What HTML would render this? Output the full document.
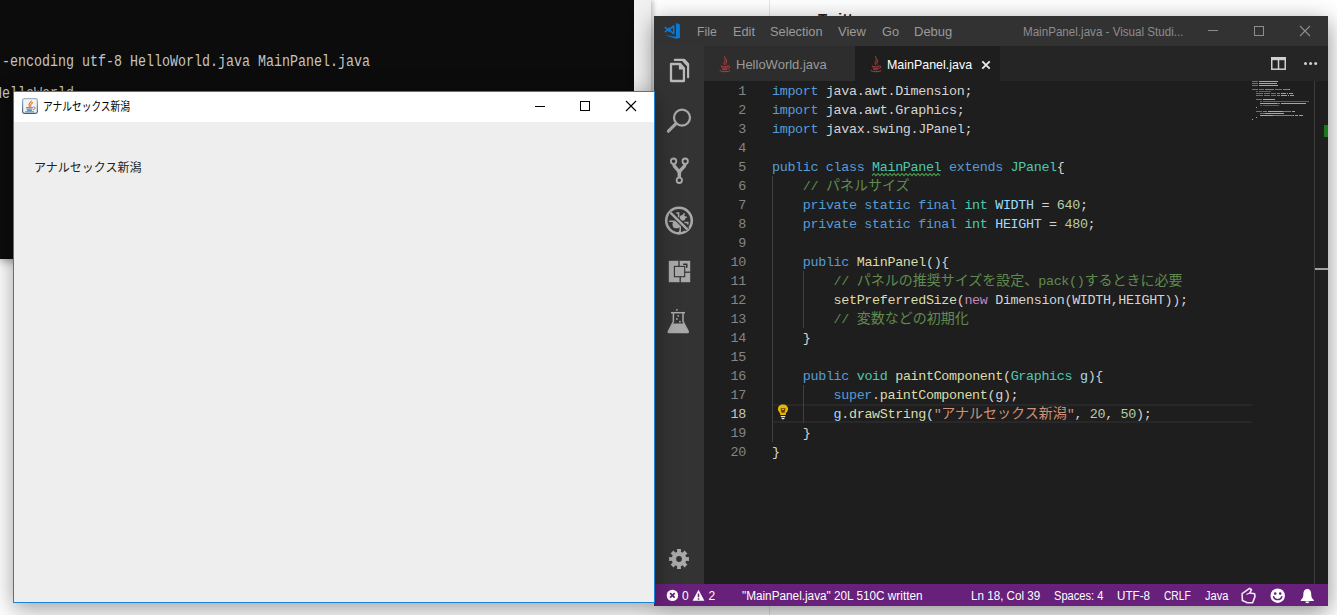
<!DOCTYPE html>
<html lang="ja">
<head>
<meta charset="utf-8">
<title>MainPanel.java - Visual Studio Code</title>
<style>
*{box-sizing:border-box;margin:0;padding:0}
html,body{width:1337px;height:615px;overflow:hidden;background:#fff}
body{position:relative;font-family:"Liberation Sans","Noto Sans CJK JP",sans-serif}
.abs{position:absolute}
/* ---------- background browser page ---------- */
#bgline{left:769px;top:0;width:1px;height:615px;background:#e6e6e6}
#bgtw{left:818px;top:11px;font-size:15px;font-weight:bold;color:#222;line-height:16px;letter-spacing:.2px}
/* ---------- console ---------- */
#con{left:0;top:0;width:634px;height:259px;background:#0c0c0c;box-shadow:0 2px 9px rgba(0,0,0,.4)}
#consb{left:634px;top:0;width:17px;height:259px;background:#f0f0f0;box-shadow:2px 0 5px rgba(0,0,0,.25)}
.cl{position:absolute;left:2px;white-space:pre;font-family:"Liberation Mono","Noto Sans CJK JP",monospace;font-size:15.6px;line-height:16px;color:#c4c4c4;transform-origin:0 50%;transform:scaleX(.8547)}
/* ---------- java window ---------- */
#jw{z-index:5;left:13px;top:91px;width:642px;height:512px;background:#eeeeee;border:1px solid #1883d7;box-shadow:0 6px 22px rgba(0,0,0,.38)}
#jt{left:0;top:0;width:640px;height:30px;background:#fff}
#jtt{left:29px;top:7px;font-size:12px;line-height:16px;color:#000;white-space:nowrap;transform-origin:0 50%;transform:scaleX(.81);font-family:"Liberation Sans","Noto Sans CJK JP",sans-serif}
#jpt{left:20px;top:68px;font-size:12px;line-height:16px;color:#222;white-space:nowrap;font-family:"Liberation Sans","Noto Sans CJK JP",sans-serif}
/* ---------- vscode ---------- */
#vs{left:654px;top:16px;width:674px;height:590px;background:#1e1e1e;box-shadow:0 6px 22px rgba(0,0,0,.45);overflow:hidden}
#vt{left:0;top:0;width:674px;height:30px;background:#323233}
.mi{position:absolute;top:8px;transform-origin:0 50%;font-size:13px;line-height:16px;color:#9a9a9a;white-space:nowrap}
#vtitle{transform-origin:0 50%;transform:scaleX(.967);left:369px;top:8px;font-size:12px;line-height:16px;color:#8d8d8d;white-space:nowrap}
#ab{left:0;top:30px;width:50px;height:538px;background:#333333}
#tabs{left:50px;top:30px;width:624px;height:35px;background:#252526}
.tab{position:absolute;top:0;height:35px;background:#2d2d2d}
.tab span{transform-origin:0 50%;position:absolute;top:10px;font-size:13px;line-height:17px;white-space:nowrap}
#ed{left:50px;top:65px;width:624px;height:503px;background:#1e1e1e}
.ln{position:absolute;left:0;width:42px;padding-top:1px;text-align:right;font-family:"Liberation Mono",monospace;font-size:13.4px;letter-spacing:-.34px;line-height:19px;color:#858585;height:19px}
.c{padding-top:1px;position:absolute;left:68px;white-space:pre;font-family:"Liberation Mono","Noto Sans CJK JP",monospace;font-size:13.4px;letter-spacing:-.34px;line-height:19px;height:19px;color:#d4d4d4}
.c i{font-style:normal}
.k{color:#569cd6}.t{color:#4ec9b0}.f{color:#dcdcaa}.v{color:#9cdcfe}.n{color:#b5cea8}.s{color:#ce9178}.m{color:#608b4e}.p{color:#c586c0}
.j{line-height:10px;font-size:14px;letter-spacing:0;font-family:"Noto Sans CJK JP",sans-serif}
.ig{position:absolute;width:1px;background:#404040}
#sb{left:0;top:568px;width:674px;height:22px;background:#68217a}
.si{transform-origin:0 50%;position:absolute;top:4px;font-size:12px;line-height:16px;color:#fff;white-space:nowrap}
#mm{left:548px;top:0;width:62px;height:60px;overflow:hidden;opacity:.75}
#mm b{position:absolute;height:1.4px;display:block}
.cur{color:#c6c6c6}
</style>
</head>
<body>
<!-- background page -->
<div class="abs" id="bgline"></div>
<div class="abs" id="bgtw">Twitter</div>

<!-- console -->
<div class="abs" id="con">
  <div class="cl" style="top:54px">-encoding utf-8 HelloWorld.java MainPanel.java</div>
  <div class="cl" style="top:86px;left:-6px">HelloWorld</div>
</div>
<div class="abs" id="consb"></div>

<!-- java window -->
<div class="abs" id="jw">
  <div class="abs" id="jt">
    <svg class="abs" style="left:8px;top:6px" width="16" height="16" viewBox="0 0 16 16">
      <defs><linearGradient id="jg" x1="0" y1="0" x2="0" y2="1"><stop offset="0" stop-color="#9fb6c9"/><stop offset="1" stop-color="#3e5f7e"/></linearGradient></defs>
      <rect x=".6" y=".6" width="14.8" height="14.8" rx="1.8" fill="#f3f3f3" stroke="url(#jg)" stroke-width="1.2"/>
      <path d="M7.6 8.6C5.6 6.6 8.2 4.6 9.4 3.2M8.8 8.2C7.6 6.6 9.8 5.6 10.6 4.6" fill="none" stroke="#e8731a" stroke-width="1.1" stroke-linecap="round"/>
      <path d="M4.4 9.7h6.2M5 11.2h5M5.6 12.4h3.8M3.6 13.8h8" fill="none" stroke="#5382a1" stroke-width="1" stroke-linecap="round"/>
      <path d="M11.4 8.8c2.2-.2 2.2 2.6-.2 3" fill="none" stroke="#5382a1" stroke-width="1"/>
    </svg>
    <div class="abs" id="jtt">アナルセックス新潟</div>
    <div class="abs" style="left:521px;top:14px;width:10px;height:1px;background:#000"></div>
    <div class="abs" style="left:566px;top:9px;width:10px;height:10px;border:1px solid #000"></div>
    <svg class="abs" style="left:611px;top:8px" width="12" height="12" viewBox="0 0 12 12"><path d="M1 1L11 11M11 1L1 11" stroke="#000" stroke-width="1.1" fill="none"/></svg>
  </div>
  <div class="abs" id="jpt">アナルセックス新潟</div>
</div>

<!-- vscode -->
<div class="abs" id="vs">
  <div class="abs" id="vt">
    <svg class="abs" style="left:10px;top:6px" width="17" height="18" viewBox="0 0 17 18">
      <path d="M12 .9L15.900 2.400V15.900L12 16.800Z" fill="#0a7ad6"/>
      <path d="M.3 13L12 14.700V16.800Z" fill="#0a7ad6"/>
      <path d="M9.700 3.900V11.800L5 7.850Z" fill="none" stroke="#0a7ad6" stroke-width="1.500" stroke-linejoin="round"/>
      <path d="M.9 5.100L5.600 9.600M.9 10.200L5.600 5.900" stroke="#0a7ad6" stroke-width="1.500" fill="none"/>
    </svg>
    <div class="mi" style="left:43px;transform:scaleX(0.94)">File</div>
    <div class="mi" style="left:79px;transform:scaleX(0.98)">Edit</div>
    <div class="mi" style="left:116px;transform:scaleX(0.983)">Selection</div>
    <div class="mi" style="left:184px">View</div>
    <div class="mi" style="left:228px;transform:scaleX(0.98)">Go</div>
    <div class="mi" style="left:260px">Debug</div>
    <div class="abs" id="vtitle">MainPanel.java - Visual Studi...</div>
    <div class="abs" style="left:554px;top:14px;width:10px;height:1px;background:#8d8d8d"></div>
    <div class="abs" style="left:600px;top:10px;width:10px;height:10px;border:1px solid #8d8d8d"></div>
    <svg class="abs" style="left:645px;top:9px" width="12" height="12" viewBox="0 0 12 12"><path d="M1 1L11 11M11 1L1 11" stroke="#8d8d8d" stroke-width="1.1" fill="none"/></svg>
  </div>
  <div class="abs" id="ab"><svg class="abs" style="left:0;top:0" width="50" height="538" viewBox="0 0 50 538">
    <!-- files -->
    <path d="M20.800 13.900H30L34.100 18.400V31.300" fill="none" stroke="#b9b9b9" stroke-width="2.200" stroke-linejoin="round" stroke-linecap="round"/>
    <path d="M29.600 14.100L33.900 18.800" stroke="#b9b9b9" stroke-width="3.400" fill="none"/>
    <path d="M17 18H26.200L29.950 22.200V35H17Z" fill="#333" stroke="#b9b9b9" stroke-width="2.300" stroke-linejoin="round"/>
    <path d="M24.900 18V23.600H30V22.200L26.200 18Z" fill="#b9b9b9"/>
    <!-- search -->
    <circle cx="28" cy="71.6" r="8" fill="none" stroke="#a9a9a9" stroke-width="2.2"/>
    <path d="M22 77.6L14.4 85.2" stroke="#a9a9a9" stroke-width="3.2" stroke-linecap="round"/>
    <!-- git -->
    <path d="M19.6 117.6C19.6 122.5 25.3 122.5 25.3 127.5V131.6M31.2 117.6C31.2 122.5 25.3 122.5 25.3 127.5" fill="none" stroke="#a9a9a9" stroke-width="3.4"/>
    <circle cx="19.6" cy="115.2" r="2.7" fill="#333" stroke="#a9a9a9" stroke-width="1.8"/>
    <circle cx="31.2" cy="115.2" r="2.7" fill="#333" stroke="#a9a9a9" stroke-width="1.8"/>
    <circle cx="25.3" cy="134.3" r="2.7" fill="#333" stroke="#a9a9a9" stroke-width="1.8"/>
    <!-- debug disabled -->
    <g>
      <circle cx="25" cy="174.600" r="12.800" fill="none" stroke="#a9a9a9" stroke-width="2.600"/>
      <circle cx="22.400" cy="178.400" r="3.900" fill="#a9a9a9"/>
      <circle cx="28.600" cy="171.800" r="2.900" fill="#a9a9a9"/>
      <path d="M22.300 166.900H24.600V171.500M28.600 170L30.600 167.400M30.500 171.200H32.800M15.200 175.200H20.400M30.400 176.500H33.800V178.400M26.200 178.500V185.200H24.800" fill="none" stroke="#a9a9a9" stroke-width="1.500"/>
      <path d="M16.400 166.600L33.600 183.600" stroke="#333" stroke-width="4.800"/>
      <path d="M16.400 166.600L33.600 183.600" stroke="#a9a9a9" stroke-width="2.500"/>
    </g>
    <!-- extensions -->
    <g transform="translate(14.8,214.8)">
      <rect x="0" y="0" width="21.4" height="21.4" fill="#a9a9a9"/>
      <path d="M10.2 0V6M11.4 15.5V21.4" stroke="#333" stroke-width="1.3"/>
      <path d="M16 11.4H21.4" stroke="#333" stroke-width="1.3"/>
      <rect x="5.6" y="5.6" width="10.3" height="10.3" fill="#a9a9a9" stroke="#333" stroke-width="1.1"/>
      <path d="M14.3 3.4H17.9V7" fill="none" stroke="#333" stroke-width="1.6"/>
    </g>
    <!-- flask -->
    <g>
      <path d="M17 266.7H31" stroke="#a9a9a9" stroke-width="1.5"/>
      <path d="M19.4 267V275.5L14.4 285.4Q14 286.6 15.4 286.6H33.2Q34.6 286.6 34.2 285.4L29 275.5V267" fill="none" stroke="#a9a9a9" stroke-width="1.5" stroke-linejoin="round"/>
      <path d="M18.8 277.6H29.8L34.4 286.6H14.2Z" fill="#a9a9a9"/>
      <circle cx="22.9" cy="263.8" r=".9" fill="#a9a9a9"/>
      <circle cx="24.2" cy="269.8" r=".9" fill="#a9a9a9"/>
      <circle cx="22.9" cy="272.9" r=".9" fill="#a9a9a9"/>
      <circle cx="25.9" cy="275.7" r=".9" fill="#a9a9a9"/>
    </g>
    <!-- gear -->
    <circle cx="25" cy="513" r="7.300" fill="#a9a9a9"/>
    <path d="M23.19 506.45L22.99 503.10L27.01 503.10L26.81 506.45L28.35 507.08L30.58 504.58L33.42 507.42L30.92 509.65L31.55 511.19L34.90 510.99L34.90 515.01L31.55 514.81L30.92 516.35L33.42 518.58L30.58 521.42L28.35 518.92L26.81 519.55L27.01 522.90L22.99 522.90L23.19 519.55L21.65 518.92L19.42 521.42L16.58 518.58L19.08 516.35L18.45 514.81L15.10 515.01L15.10 510.99L18.45 511.19L19.08 509.65L16.58 507.42L19.42 504.58L21.65 507.08Z" fill="#a9a9a9"/>
    <circle cx="25" cy="513" r="2.900" fill="#333"/>
  </svg></div>
  <div class="abs" id="tabs">
    <svg class="abs" style="left:567px;top:11px" width="15" height="13" viewBox="0 0 15 13"><rect x=".75" y="1.5" width="13.5" height="10.7" fill="none" stroke="#d0d0d0" stroke-width="1.5"/><path d="M0 1.6H15" stroke="#d0d0d0" stroke-width="3.2"/><path d="M7.5 1.5V12" stroke="#d0d0d0" stroke-width="1.5"/></svg>
    <svg class="abs" style="left:599px;top:15px" width="16" height="5" viewBox="0 0 16 5"><circle cx="2.5" cy="2.4" r="1.5" fill="#d0d0d0"/><circle cx="7.6" cy="2.4" r="1.5" fill="#d0d0d0"/><circle cx="12.7" cy="2.4" r="1.5" fill="#d0d0d0"/></svg>
    <div class="tab" style="left:0;width:150.5px"><svg class="abs" style="left:14px;top:9px" width="14" height="18" viewBox="0 0 14 18"><g fill="none" stroke="#c24141" stroke-width=".9" stroke-linecap="round"><path d="M6.4 9.6C4.6 7.4 8.8 6 6.6 1.6"/><path d="M8 9.2C7 7.6 9.4 6.6 8.6 4.8"/><path d="M3 10.8C2.2 11.4 5 11.9 7 11.8S10.6 11.2 10 10.8"/><path d="M10.6 11C12.4 10.6 12.6 12.6 10.4 13.4"/><path d="M3.6 12.8C3.4 13.6 9.4 13.7 9.8 12.9"/><path d="M4.2 14.4C4.2 15 8.8 15.1 9 14.5"/><path d="M2 15.2C.4 16.2 6 17 9 16.6S12.4 15.6 11.6 15.4"/></g></svg><span style="left:32px;color:#9a9a9a">HelloWorld.java</span></div>
    <div class="tab" style="left:150.5px;width:145.5px;background:#1e1e1e"><svg class="abs" style="left:14px;top:9px" width="14" height="18" viewBox="0 0 14 18"><g fill="none" stroke="#c24141" stroke-width=".9" stroke-linecap="round"><path d="M6.4 9.6C4.6 7.4 8.8 6 6.6 1.6"/><path d="M8 9.2C7 7.6 9.4 6.6 8.6 4.8"/><path d="M3 10.8C2.2 11.4 5 11.9 7 11.8S10.6 11.2 10 10.8"/><path d="M10.6 11C12.4 10.6 12.6 12.6 10.4 13.4"/><path d="M3.6 12.8C3.4 13.6 9.4 13.7 9.8 12.9"/><path d="M4.2 14.4C4.2 15 8.8 15.1 9 14.5"/><path d="M2 15.2C.4 16.2 6 17 9 16.6S12.4 15.6 11.6 15.4"/></g></svg><span style="left:32.5px;color:#fff;transform:scaleX(.957)">MainPanel.java</span><svg class="abs" style="left:126.600px;top:13.500px" width="10" height="10" viewBox="0 0 10 10"><path d="M1.3 1.3L8.7 8.7M8.7 1.3L1.3 8.7" stroke="#e8e8e8" stroke-width="1.9"/></svg></div>
  </div>
  <div class="abs" id="ed">
    <div class="abs" style="left:68px;top:323px;width:480px;height:19px;border-top:2px solid #282828;border-bottom:2px solid #282828"></div>
    <div class="ig" style="left:68px;top:95px;height:266px"></div>
    <div class="ig" style="left:99px;top:190px;height:57px"></div>
    <div class="ig" style="left:99px;top:304px;height:38px"></div>
<div class="ln" style="top:0px">1</div>
<div class="c" style="top:0px"><i class="k">import</i> java.awt.Dimension;</div>
<div class="ln" style="top:19px">2</div>
<div class="c" style="top:19px"><i class="k">import</i> java.awt.Graphics;</div>
<div class="ln" style="top:38px">3</div>
<div class="c" style="top:38px"><i class="k">import</i> javax.swing.JPanel;</div>
<div class="ln" style="top:57px">4</div>
<div class="ln" style="top:76px">5</div>
<div class="c" style="top:76px"><i class="k">public class </i><i class="t sq">MainPanel</i> <i class="k">extends</i> <i class="t">JPanel</i>{</div>
<div class="ln" style="top:95px">6</div>
<div class="c" style="top:95px">    <i class="m">// <i class="j">パネルサイズ</i></i></div>
<div class="ln" style="top:114px">7</div>
<div class="c" style="top:114px">    <i class="k">private static final </i><i class="t">int</i> <i class="v">WIDTH</i> = <i class="n">640</i>;</div>
<div class="ln" style="top:133px">8</div>
<div class="c" style="top:133px">    <i class="k">private static final </i><i class="t">int</i> <i class="v">HEIGHT</i> = <i class="n">480</i>;</div>
<div class="ln" style="top:152px">9</div>
<div class="ln" style="top:171px">10</div>
<div class="c" style="top:171px">    <i class="k">public</i> <i class="f">MainPanel</i>(){</div>
<div class="ln" style="top:190px">11</div>
<div class="c" style="top:190px">        <i class="m">// <i class="j">パネルの推奨サイズを設定、</i>pack()<i class="j">するときに必要</i></i></div>
<div class="ln" style="top:209px">12</div>
<div class="c" style="top:209px">        <i class="f">setPreferredSize</i>(<i class="p">new</i> Dimension(WIDTH,HEIGHT));</div>
<div class="ln" style="top:228px">13</div>
<div class="c" style="top:228px">        <i class="m">// <i class="j">変数などの初期化</i></i></div>
<div class="ln" style="top:247px">14</div>
<div class="c" style="top:247px">    }</div>
<div class="ln" style="top:266px">15</div>
<div class="ln" style="top:285px">16</div>
<div class="c" style="top:285px">    <i class="k">public</i> <i class="t">void</i> <i class="f">paintComponent</i>(<i class="t">Graphics</i> <i class="v">g</i>){</div>
<div class="ln" style="top:304px">17</div>
<div class="c" style="top:304px">        <i class="k">super</i>.<i class="f">paintComponent</i>(g);</div>
<div class="ln cur" style="top:323px">18</div>
<div class="c" style="top:323px">        <i class="v">g</i>.<i class="f">drawString</i>(<i class="s">&quot;<i class="j">アナルセックス新潟</i>&quot;</i>, <i class="n">20</i>, <i class="n">50</i>);</div>
<div class="ln" style="top:342px">19</div>
<div class="c" style="top:342px">    }</div>
<div class="ln" style="top:361px">20</div>
<div class="c" style="top:361px">}</div>
    <svg class="abs" style="left:167px;top:91px" width="71" height="5" viewBox="0 0 71 5"><path id="sqp" d="M1.0 3.6L3.0 1.6L5.0 3.6L7.0 1.6L9.0 3.6L11.0 1.6L13.0 3.6L15.0 1.6L17.0 3.6L19.0 1.6L21.0 3.6L23.0 1.6L25.0 3.6L27.0 1.6L29.0 3.6L31.0 1.6L33.0 3.6L35.0 1.6L37.0 3.6L39.0 1.6L41.0 3.6L43.0 1.6L45.0 3.6L47.0 1.6L49.0 3.6L51.0 1.6L53.0 3.6L55.0 1.6L57.0 3.6L59.0 1.6L61.0 3.6L63.0 1.6L65.0 3.6L67.0 1.6L69.0 3.6" fill="none" stroke="#4c9a4c" stroke-width="1.100"/></svg>
    <svg class="abs" style="left:73px;top:323px" width="12" height="17" viewBox="0 0 12 17"><path d="M6 .5C3 .5 .9 2.5 .9 5C.9 7 2.4 8 3.2 9.4V10.9H8.8V9.4C9.6 8 11.1 7 11.1 5C11.1 2.500 9 .5 6 .5Z" fill="#eab700"/><path d="M3.500 4.300H8.500L7.500 8.800H4.500Z" fill="#5a4300"/><path d="M5 5.500H7" stroke="#eab700" stroke-width="1"/><path d="M3.800 12.700H8.200M4.600 14.700H7.400" stroke="#e4e4e4" stroke-width="1.300"/></svg>
    <div class="abs" id="mm"><b style="left:0.0px;top:0px;width:6.0px;background:#569cd6"></b><b style="left:7.0px;top:0px;width:19.0px;background:#d4d4d4"></b><b style="left:0.0px;top:2px;width:6.0px;background:#569cd6"></b><b style="left:7.0px;top:2px;width:18.0px;background:#d4d4d4"></b><b style="left:0.0px;top:4px;width:6.0px;background:#569cd6"></b><b style="left:7.0px;top:4px;width:19.0px;background:#d4d4d4"></b><b style="left:0.0px;top:8px;width:6.0px;background:#569cd6"></b><b style="left:7.0px;top:8px;width:5.0px;background:#569cd6"></b><b style="left:13.0px;top:8px;width:9.0px;background:#4ec9b0"></b><b style="left:23.0px;top:8px;width:7.0px;background:#569cd6"></b><b style="left:31.0px;top:8px;width:6.0px;background:#4ec9b0"></b><b style="left:37.0px;top:8px;width:1.0px;background:#d4d4d4"></b><b style="left:4.0px;top:10px;width:2.0px;background:#608b4e"></b><b style="left:7.0px;top:10px;width:12.0px;background:#608b4e"></b><b style="left:4.0px;top:12px;width:7.0px;background:#569cd6"></b><b style="left:12.0px;top:12px;width:6.0px;background:#569cd6"></b><b style="left:19.0px;top:12px;width:5.0px;background:#569cd6"></b><b style="left:25.0px;top:12px;width:3.0px;background:#4ec9b0"></b><b style="left:29.0px;top:12px;width:5.0px;background:#9cdcfe"></b><b style="left:35.0px;top:12px;width:1.0px;background:#d4d4d4"></b><b style="left:37.0px;top:12px;width:3.0px;background:#b5cea8"></b><b style="left:40.0px;top:12px;width:1.0px;background:#d4d4d4"></b><b style="left:4.0px;top:14px;width:7.0px;background:#569cd6"></b><b style="left:12.0px;top:14px;width:6.0px;background:#569cd6"></b><b style="left:19.0px;top:14px;width:5.0px;background:#569cd6"></b><b style="left:25.0px;top:14px;width:3.0px;background:#4ec9b0"></b><b style="left:29.0px;top:14px;width:6.0px;background:#9cdcfe"></b><b style="left:36.0px;top:14px;width:1.0px;background:#d4d4d4"></b><b style="left:38.0px;top:14px;width:3.0px;background:#b5cea8"></b><b style="left:41.0px;top:14px;width:1.0px;background:#d4d4d4"></b><b style="left:4.0px;top:18px;width:6.0px;background:#569cd6"></b><b style="left:11.0px;top:18px;width:9.0px;background:#dcdcaa"></b><b style="left:20.0px;top:18px;width:3.0px;background:#d4d4d4"></b><b style="left:8.0px;top:20px;width:2.0px;background:#608b4e"></b><b style="left:11.0px;top:20px;width:46.0px;background:#608b4e"></b><b style="left:8.0px;top:22px;width:16.0px;background:#dcdcaa"></b><b style="left:24.0px;top:22px;width:1.0px;background:#d4d4d4"></b><b style="left:25.0px;top:22px;width:3.0px;background:#c586c0"></b><b style="left:29.0px;top:22px;width:25.0px;background:#d4d4d4"></b><b style="left:8.0px;top:24px;width:2.0px;background:#608b4e"></b><b style="left:11.0px;top:24px;width:16.0px;background:#608b4e"></b><b style="left:4.0px;top:26px;width:1.0px;background:#d4d4d4"></b><b style="left:4.0px;top:30px;width:6.0px;background:#569cd6"></b><b style="left:11.0px;top:30px;width:4.0px;background:#4ec9b0"></b><b style="left:16.0px;top:30px;width:14.0px;background:#dcdcaa"></b><b style="left:30.0px;top:30px;width:1.0px;background:#d4d4d4"></b><b style="left:31.0px;top:30px;width:8.0px;background:#4ec9b0"></b><b style="left:40.0px;top:30px;width:1.0px;background:#9cdcfe"></b><b style="left:41.0px;top:30px;width:2.0px;background:#d4d4d4"></b><b style="left:8.0px;top:32px;width:5.0px;background:#569cd6"></b><b style="left:13.0px;top:32px;width:1.0px;background:#d4d4d4"></b><b style="left:14.0px;top:32px;width:14.0px;background:#dcdcaa"></b><b style="left:28.0px;top:32px;width:4.0px;background:#d4d4d4"></b><b style="left:8.0px;top:34px;width:1.0px;background:#9cdcfe"></b><b style="left:9.0px;top:34px;width:1.0px;background:#d4d4d4"></b><b style="left:10.0px;top:34px;width:10.0px;background:#dcdcaa"></b><b style="left:20.0px;top:34px;width:1.0px;background:#d4d4d4"></b><b style="left:21.0px;top:34px;width:20.0px;background:#ce9178"></b><b style="left:41.0px;top:34px;width:1.0px;background:#d4d4d4"></b><b style="left:43.0px;top:34px;width:2.0px;background:#b5cea8"></b><b style="left:45.0px;top:34px;width:1.0px;background:#d4d4d4"></b><b style="left:47.0px;top:34px;width:2.0px;background:#b5cea8"></b><b style="left:49.0px;top:34px;width:2.0px;background:#d4d4d4"></b><b style="left:4.0px;top:36px;width:1.0px;background:#d4d4d4"></b><b style="left:0.0px;top:38px;width:1.0px;background:#d4d4d4"></b></div>
    <div class="abs" style="left:610px;top:0;width:1px;height:503px;background:#3c3c3c"></div>
    <div class="abs" style="left:620px;top:44px;width:4px;height:12px;background:#187a18"></div>
    <div class="abs" style="left:611px;top:187px;width:13px;height:2px;background:#a0a0a0"></div>
  </div>
  <div class="abs" id="sb">
    <svg class="abs" style="left:12px;top:5px" width="13" height="13" viewBox="0 0 13 13"><circle cx="6.4" cy="6.4" r="5.7" fill="#fff"/><path d="M4.1 4.1L8.7 8.7M8.7 4.1L4.1 8.7" stroke="#68217a" stroke-width="1.7"/></svg>
    <div class="si" style="left:28px">0</div>
    <svg class="abs" style="left:38px;top:5px" width="13" height="13" viewBox="0 0 13 13"><path d="M6.5 .8L12.4 11.8H.6Z" fill="#fff"/><path d="M6.5 4.4V8.2M6.5 9.2V10.8" stroke="#68217a" stroke-width="1.5"/></svg>
    <div class="si" style="left:54.5px">2</div>
    <div class="si" id="smsg" style="transform:scaleX(0.98);left:88px">"MainPanel.java" 20L 510C written</div>
    <div class="si" id="s1" style="transform:scaleX(0.97);left:316.5px">Ln 18, Col 39</div>
    <div class="si" id="s2" style="transform:scaleX(0.927);left:400px">Spaces: 4</div>
    <div class="si" id="s3" style="transform:scaleX(0.973);left:463px">UTF-8</div>
    <div class="si" id="s4" style="transform:scaleX(0.85);left:510px">CRLF</div>
    <div class="si" id="s5" style="transform:scaleX(0.925);left:550.5px">Java</div>
    <svg class="abs" style="left:587px;top:3px" width="16" height="17" viewBox="0 0 16 17"><path d="M8.600 1.300L10.500 2.600L8.800 6L13.600 6.700L14 9.600L11.600 15.700H6.400L1.400 13.600L1.100 6.700Z" fill="none" stroke="#f3e6f6" stroke-width="1.600" stroke-linejoin="round"/><path d="M8.800 6L5.400 7.600" stroke="#f3e6f6" stroke-width="1.100"/></svg>
    <svg class="abs" style="left:616px;top:3.6px" width="16" height="16" viewBox="0 0 16 16"><circle cx="7.7" cy="7.7" r="7.2" fill="#fff"/><circle cx="5.2" cy="5.6" r="1.3" fill="#68217a"/><circle cx="10.2" cy="5.6" r="1.3" fill="#68217a"/><path d="M3.6 8.8C4.6 12.6 10.8 12.6 11.8 8.8" fill="none" stroke="#68217a" stroke-width="1.4" stroke-linecap="round"/></svg>
    <svg class="abs" style="left:646px;top:3.8px" width="15" height="16" viewBox="0 0 15 16"><path d="M7.3 1C4.4 1 3.4 3.6 3.4 6.2C3.4 9.4 2.4 10.6 .8 12V12.9H13.8V12C12.2 10.6 11.2 9.4 11.2 6.2C11.2 3.6 10.2 1 7.3 1Z" fill="#fff"/><path d="M5.200 13.600C5.400 15.900 9.200 15.900 9.400 13.600Z" fill="#fff"/></svg>
  </div>
</div>
</body>
</html>
